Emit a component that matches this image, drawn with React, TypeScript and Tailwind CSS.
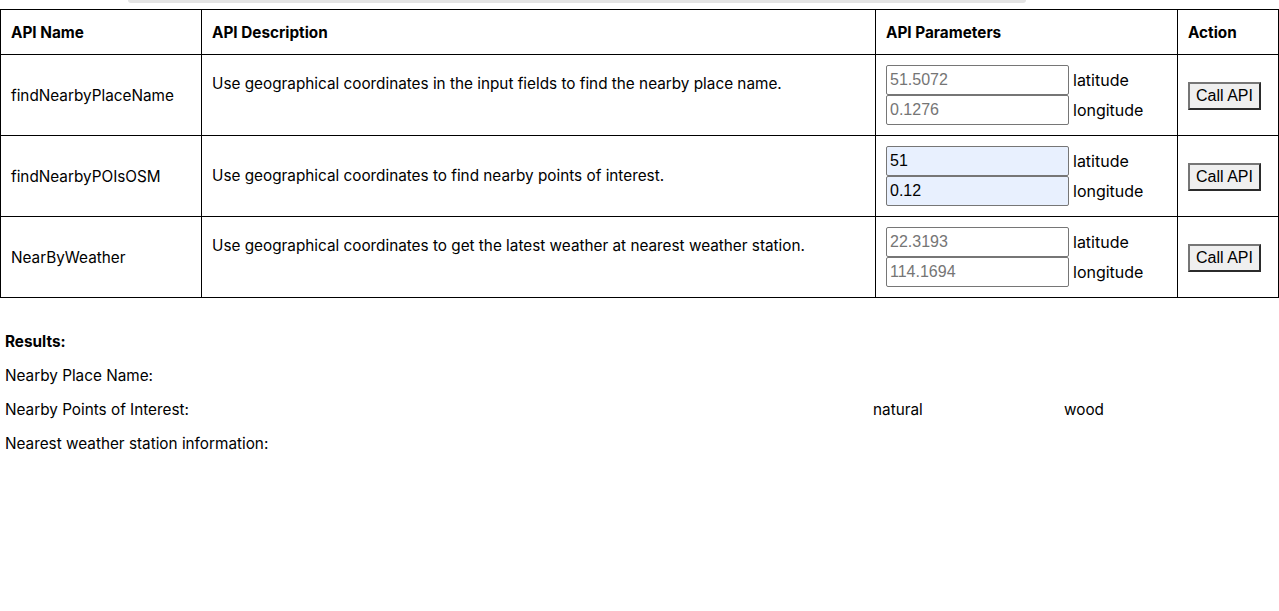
import { useState } from 'react';

type Api = {
  name: string;
  description: string;
  lat: string;
  lng: string;
  filled?: boolean;
  twoLine?: boolean;
};

const apis: Api[] = [
  {
    name: 'findNearbyPlaceName',
    description: 'Use geographical coordinates in the input fields to find the nearby place name.',
    lat: '51.5072',
    lng: '0.1276',
    twoLine: true,
  },
  {
    name: 'findNearbyPOIsOSM',
    description: 'Use geographical coordinates to find nearby points of interest.',
    lat: '51',
    lng: '0.12',
    filled: true,
  },
  {
    name: 'NearByWeather',
    description: 'Use geographical coordinates to get the latest weather at nearest weather station.',
    lat: '22.3193',
    lng: '114.1694',
    twoLine: true,
  },
];

const sans = "font-['Inter',sans-serif]";
const arial = "font-['Liberation_Sans',Arial,sans-serif]";

function CoordInput({ value, filled }: { value: string; filled?: boolean }) {
  const [v, setV] = useState(filled ? value : '');
  return (
    <input
      type="text"
      value={v}
      onChange={e => setV(e.target.value)}
      placeholder={value}
      className={`${arial} block w-[183px] h-[30px] px-[3px] text-[16px] border border-[#767676] rounded-[2px] outline-none placeholder:text-[#757575] ${filled ? 'bg-[#e8f0fe] text-black' : 'bg-white'}`}
    />
  );
}

export default function App() {
  return (
    <div className={`${sans} w-[1279px] h-[611px] bg-white text-black overflow-hidden`}>
      <div className="h-[9px]">
        <div className="ml-[128px] w-[898px] h-[3px] bg-[#e4e4e4] rounded-b-full" />
      </div>
      <table className="w-[1279px] border-collapse text-[15.3px]">
        <thead>
          <tr className="h-[45px]">
            <th className="w-[201px] border border-black px-[10px] pt-[2px] text-left font-bold">API Name</th>
            <th className="w-[674px] border border-black px-[10px] pt-[2px] text-left font-bold">API Description</th>
            <th className="w-[302px] border border-black px-[10px] pt-[2px] text-left font-bold">API Parameters</th>
            <th className="border border-black px-[10px] pt-[2px] text-left font-bold">Action</th>
          </tr>
        </thead>
        <tbody>
          {apis.map(api => (
            <tr key={api.name} className="h-[81px]">
              <td className="border border-black px-[10px] pt-[2px] align-middle">{api.name}</td>
              <td className="border border-black px-[10px] align-middle leading-[22px]">
                {api.description}
                {api.twoLine && (
                  <>
                    <br />
                    &nbsp;
                  </>
                )}
              </td>
              <td className="border border-black px-[10px] align-middle">
                <div className="grid grid-cols-[auto_1fr] items-center gap-x-[4px]">
                  <CoordInput value={api.lat} filled={api.filled} />
                  <span className="text-[16px]">latitude</span>
                  <CoordInput value={api.lng} filled={api.filled} />
                  <span className="text-[16px]">longitude</span>
                </div>
              </td>
              <td className="border border-black px-[10px] pt-[2px] align-middle">
                <button
                  className={`${arial} text-[16px] px-[6px] h-[28px] bg-[#efefef] border-2 border-t-[#767676] border-l-[#767676] border-r-[#2b2b2b] border-b-[#2b2b2b]`}
                >
                  Call API
                </button>
              </td>
            </tr>
          ))}
        </tbody>
      </table>

      <div className="px-[5px] pt-[33px] text-[15.3px] flex flex-col gap-[12px] leading-[22px]">
        <div className="font-bold">Results:</div>
        <div>Nearby Place Name:</div>
        <div className="grid grid-cols-[868px_191px_auto]">
          <span>Nearby Points of Interest:</span>
          <span>natural</span>
          <span>wood</span>
        </div>
        <div>Nearest weather station information:</div>
      </div>
    </div>
  );
}
